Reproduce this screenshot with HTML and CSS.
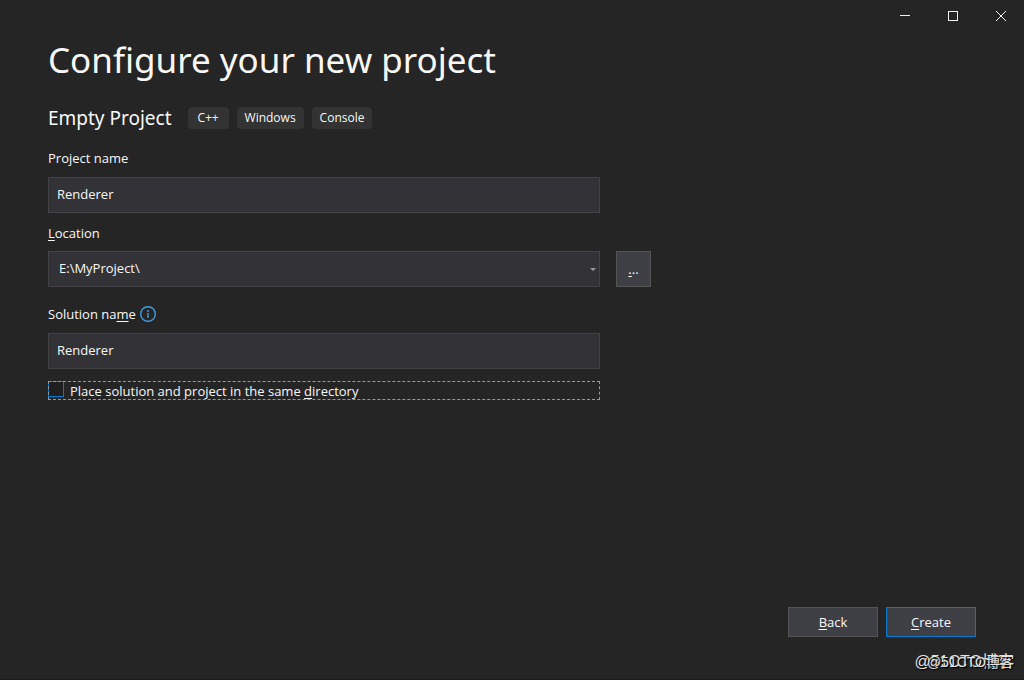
FILE: index.html
```html
<!DOCTYPE html>
<html lang="en">
<head>
<meta charset="utf-8">
<meta name="viewport" content="width=device-width, initial-scale=1">
<title>Configure your new project</title>
<link rel="stylesheet" href="styles.css">
</head>
<body>
<div class="window">
  <header class="titlebar">
    <button class="caption" type="button" aria-label="Minimize"><svg width="10" height="10" viewBox="0 0 10 10" shape-rendering="crispEdges"><path d="M0 4.5H10"/></svg></button>
    <button class="caption" type="button" aria-label="Maximize"><svg width="10" height="10" viewBox="0 0 10 10" shape-rendering="crispEdges"><path d="M.5 .5H9.5V9.5H.5Z"/></svg></button>
    <button class="caption" type="button" aria-label="Close"><svg width="10" height="10" viewBox="0 0 10 10"><path d="M0 0L10 10M10 0L0 10"/></svg></button>
  </header>
  <main class="content">
    <h1 class="title">Configure your new project</h1>
    <div class="template">
      <h2 class="template-name">Empty Project</h2>
      <ul class="tags">
        <li class="tag">C++</li>
        <li class="tag">Windows</li>
        <li class="tag">Console</li>
      </ul>
    </div>
    <form class="form" id="project-form">
      <div class="field">
        <label class="label" for="project-name">Project name</label>
        <input class="control" id="project-name" type="text" value="Renderer">
      </div>
      <div class="field field-location">
        <label class="label" for="location"><u>L</u>ocation</label>
        <div class="location-row">
          <div class="combo">
            <select class="control select" id="location"><option>E:\MyProject\</option></select>
            <svg class="arrow" width="6" height="3" viewBox="0 0 6 3" aria-hidden="true"><path d="M0 0H6L3 3Z"/></svg>
          </div>
          <button class="browse" type="button" aria-label="Browse"><span><u>.</u>..</span></button>
        </div>
      </div>
      <div class="field field-solution">
        <div class="label-row">
          <label class="label" for="solution-name">Solution na<u>m</u>e</label>
          <svg class="info" width="16" height="16" viewBox="0 0 16 16" aria-hidden="true"><circle cx="8" cy="8" r="7.3"/><path d="M8 7V12M8 4V6"/></svg>
        </div>
        <input class="control" id="solution-name" type="text" value="Renderer">
      </div>
      <label class="check"><input class="checkbox" type="checkbox"><span>Place solution and project in the same <u>d</u>irectory</span></label>
    </form>
  </main>
  <footer class="actions">
    <button class="button" type="button"><u>B</u>ack</button>
    <button class="button primary" type="submit" form="project-form"><u>C</u>reate</button>
  </footer>
  <div class="watermark watermark-large">@51CTO博客</div>
  <div class="watermark watermark-small">@51CTO博客</div>
</div>
</body>
</html>
```
FILE: styles.css
```css
* { box-sizing: border-box; }

body {
  margin: 0;
  background: #252526;
  color: #f8f8f8;
  font: 13px/20px "Open Sans", "Noto Sans", sans-serif;
}

button, input, select { font: inherit; color: inherit; }

u {
  text-decoration-thickness: 1px;
  text-underline-offset: 2px;
  text-decoration-skip-ink: none;
}

.window {
  position: relative;
  display: flex;
  flex-direction: column;
  min-height: 100vh;
  overflow: hidden;
  border-bottom: 1px solid #1b1b1c;
}

.titlebar {
  display: flex;
  justify-content: flex-end;
  height: 32px;
}

.caption {
  display: flex;
  align-items: center;
  justify-content: center;
  width: 48px;
  padding: 0 0 0 2px;
  border: 0;
  background: none;
}

.caption svg { fill: none; stroke: #f1f1f1; }

.content { flex: 1; padding: 0 48px; }

.title {
  margin: 0;
  font-family: "Noto Sans", "Open Sans", sans-serif;
  font-size: 35px;
  font-weight: 400;
  line-height: 56px;
}

.template {
  display: flex;
  align-items: center;
  gap: 16px;
  margin-top: 16px;
}

.template-name {
  margin: 0;
  font-family: "Noto Sans", "Open Sans", sans-serif;
  font-size: 19px;
  font-weight: 400;
  line-height: 28px;
}

.tags {
  display: flex;
  gap: 8px;
  margin: 0;
  padding: 0;
  list-style: none;
}

.tag {
  min-width: 41px;
  padding: 0 8px;
  border-radius: 4px;
  background: #333334;
  font-size: 12px;
  line-height: 22px;
  text-align: center;
}

.form {
  display: flex;
  flex-direction: column;
  max-width: 552px;
  margin-top: 16px;
}

.field {
  display: flex;
  flex-direction: column;
  gap: 9px;
  margin-bottom: 10px;
}

.field-location { gap: 8px; }

.field-solution { margin-top: 7px; margin-bottom: 12px; }

.label-row { display: flex; align-items: center; gap: 4px; }

.info { fill: none; stroke: #3f9fe0; stroke-width: 1.4; }

.control {
  width: 100%;
  height: 36px;
  padding: 0 8px 2px;
  border: 1px solid #434346;
  border-radius: 0;
  background: #333337;
  outline: none;
}

.location-row { display: flex; margin-right: -51px; gap: 16px; }

.combo { position: relative; flex: 1; }

.select { display: block; appearance: none; padding: 0 24px 2px 10px; }

.arrow {
  position: absolute;
  top: 17px;
  right: 4px;
  fill: #999;
  pointer-events: none;
}

.browse {
  width: 35px;
  height: 36px;
  padding: 0;
  border: 1px solid #555;
  background: #3f3f46;
}

.check {
  display: flex;
  gap: 6px;
  height: 19px;
  outline: 1px dashed #999;
  outline-offset: -1px;
}

.checkbox {
  appearance: none;
  width: 16px;
  height: 16px;
  margin: 0;
  border: 1px solid #007acc;
  background: #1f1f20;
}

.actions {
  display: flex;
  justify-content: flex-end;
  gap: 8px;
  padding: 0 48px 42px;
}

.button {
  width: 90px;
  height: 30px;
  padding: 0;
  border: 1px solid #555;
  background: #3f3f46;
}

.primary { border-color: #007acc; }

.watermark {
  position: absolute;
  color: #e4e4e4;
  text-shadow: 1px 1px 1px #000;
  white-space: nowrap;
  font-family: "Liberation Sans", "Noto Sans CJK SC", sans-serif;
}

.watermark-large { right: 10px; bottom: 7px; font-size: 16px; }

.watermark-small { right: 10px; bottom: 7px; font-size: 14px; }
```
